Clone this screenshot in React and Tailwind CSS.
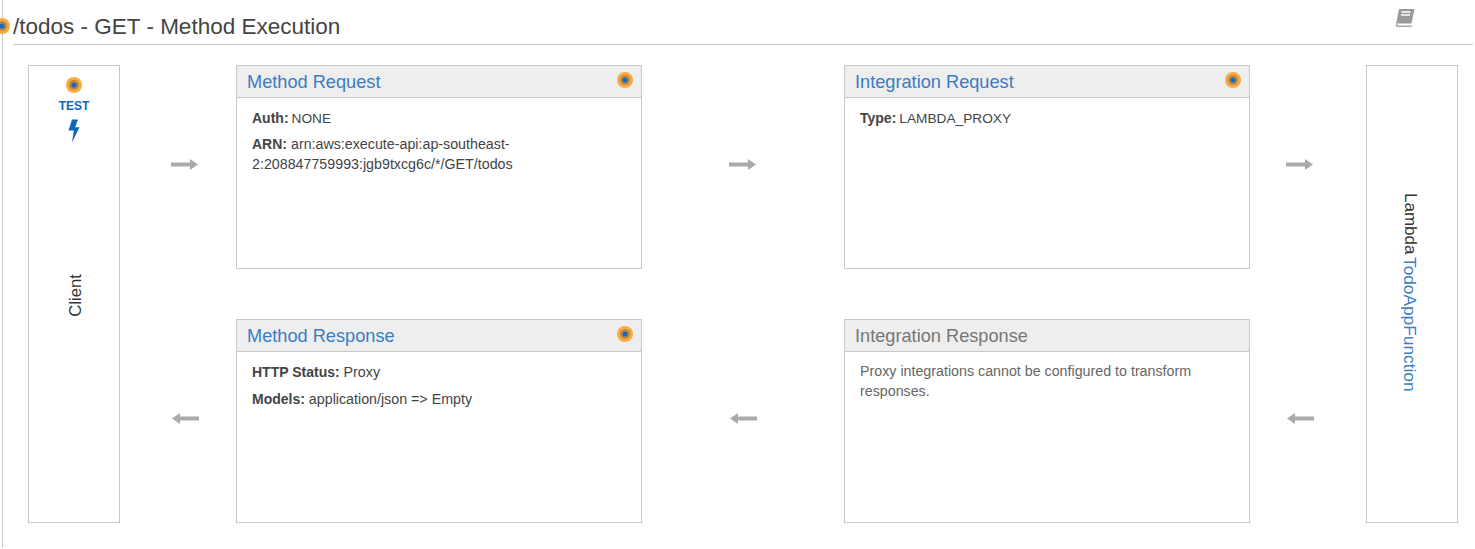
function Dot({ className = "" }) {
  return (
    <svg width="16" height="16" viewBox="0 0 16 16" className={className}>
      <circle cx="8" cy="8" r="8" fill="#f9ab3c" />
      <circle cx="8" cy="8" r="5" fill="#b98a45" />
      <circle cx="8" cy="8" r="2.6" fill="#1d68c4" />
    </svg>
  );
}

function Arrow({ left = false, className = "" }) {
  return (
    <svg width="28" height="13" viewBox="0 0 28 13" className={className}>
      <path
        d={left ? "M28 4.5H9V1L1 6.5L9 12V8.5H28Z" : "M0 4.5H19V1L27 6.5L19 12V8.5H0Z"}
        fill="#aaaaaa"
      />
    </svg>
  );
}

function Card({ title, muted = false, dot = false, children }) {
  return (
    <div className="border border-[#c8c8c8] bg-white flex flex-col">
      <div className="h-[32px] shrink-0 bg-[#eeeeee] border-b border-[#c8c8c8] pl-[10px] pr-[8px] flex items-center justify-between">
        <span className={`text-[18.2px] leading-[32px] ${muted ? "text-[#777777]" : "text-[#3b7cc4]"}`}>{title}</span>
        {dot && <Dot className="mt-[-3px]" />}
      </div>
      <div className={`pt-[10px] px-[15px] text-[14.25px] leading-[20px] ${muted ? "text-[#666666]" : "text-[#444444]"}`}>
        {children}
      </div>
    </div>
  );
}

function Line({ label, children }) {
  return (
    <p className="mb-[5px]">
      <b className="font-bold text-[14px]">{label}</b> {children}
    </p>
  );
}

export default function App() {
  return (
    <div className="relative w-[1475px] h-[549px] bg-white overflow-hidden font-['Liberation_Sans',Arial,sans-serif] text-[#444444]">
      <div className="ml-[2px] h-[548px] border-l border-[#c8c8c8] pl-[10px] pr-[2px]">
        <div className="relative h-[45px] border-b border-[#c8c8c8] pt-[12px]">
          <h1 className="text-[22.5px] leading-[30px] font-normal text-[#444444]">/todos - GET - Method Execution</h1>
          <svg width="22" height="20" viewBox="0 0 22 20" className="absolute left-[1381px] top-[8px]">
            <path d="M5 1H20.5L17.5 15.5H2.2L5 1Z" fill="#999999" />
            <path d="M2.2 15.5C1 17.5 2 19 3.5 19H17L19 17.5H4.5C3.5 17.5 3.2 16.5 4 15.5Z" fill="#aaaaaa" />
            <path d="M7.5 4H16.5M7 7H16" stroke="#ffffff" strokeWidth="1.3" />
          </svg>
        </div>

        <div className="ml-[15px] mt-[20px] grid grid-cols-[92px_116px_406px_202px_406px_116px_92px] grid-rows-[204px_50px_204px]">
          <div className="row-span-3 border border-[#c8c8c8] relative flex items-center justify-center">
            <div className="absolute top-[11px] left-0 right-0 flex flex-col items-center">
              <Dot className="mb-[6px]" />
              <span className="text-[12px] leading-[14px] font-bold text-[#1166bb]">TEST</span>
              <svg width="13" height="24" viewBox="0 0 13 24" className="mt-[6px] ml-[-2px]">
                <path d="M5 0.5H11L8.2 8.2H12.5L5 23.5L6.8 11.5H1.5Z" fill="#1166bb" />
              </svg>
            </div>
            <span className="[writing-mode:vertical-rl] rotate-180 text-[16.7px] leading-[20px] text-[#333333] ml-[3px] mt-[3px]">Client</span>
          </div>

          <div className="flex justify-start pl-[51px] pt-[93px]"><Arrow /></div>

          <Card title="Method Request" dot>
            <Line label="Auth:"><span className="text-[13.7px] ml-[-1px]">NONE</span></Line>
            <Line label="ARN:">arn:aws:execute-api:ap-southeast-2:208847759993:jgb9txcg6c/*/GET/todos</Line>
          </Card>

          <div className="flex justify-center pt-[93px]"><Arrow /></div>

          <Card title="Integration Request" dot>
            <Line label="Type:"><span className="text-[13.7px] ml-[-1px]">LAMBDA_PROXY</span></Line>
          </Card>

          <div className="flex justify-start pl-[36px] pt-[93px]"><Arrow /></div>

          <div className="row-span-3 border border-[#c8c8c8] flex justify-center pt-[127px]">
            <span className="[writing-mode:vertical-rl] text-[17px] leading-[20px] text-[#333333] ml-[-4px]">
              Lambda <span className="text-[#3b7cc4] text-[17.3px] mt-[-2px]">TodoAppFunction</span>
            </span>
          </div>

          <div className="col-start-2 row-start-3 flex justify-start pl-[51px] pt-[93px]"><Arrow left /></div>

          <div className="col-start-3 row-start-3 grid">
            <Card title="Method Response" dot>
              <Line label="HTTP Status:">Proxy</Line>
              <div className="h-[2px]" />
              <Line label="Models:">application/json =&gt; Empty</Line>
            </Card>
          </div>

          <div className="col-start-4 row-start-3 flex justify-start pl-[87px] pt-[93px]"><Arrow left /></div>

          <div className="col-start-5 row-start-3 grid">
            <Card title="Integration Response" muted>
              <p className="mt-[-1px]">Proxy integrations cannot be configured to transform responses.</p>
            </Card>
          </div>

          <div className="col-start-6 row-start-3 flex justify-start pl-[36px] pt-[93px]"><Arrow left /></div>
        </div>
      </div>

      <Dot className="absolute left-[-6px] top-[18px]" />
    </div>
  );
}
